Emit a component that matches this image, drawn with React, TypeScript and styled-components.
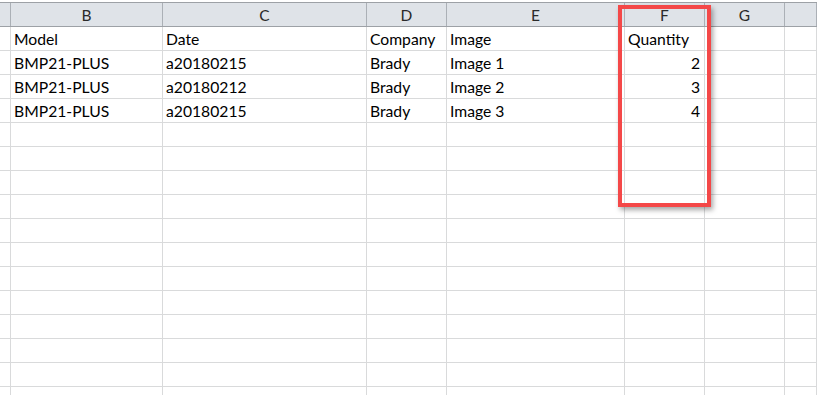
import React from 'react';
import styled, { createGlobalStyle } from 'styled-components';

const GlobalStyle = createGlobalStyle`
  html, body {
    margin: 0;
    padding: 0;
    background: #ffffff;
  }
  body {
    font-family: Lato, "Liberation Sans", sans-serif;
  }
`;

const COLUMNS = ['', 'B', 'C', 'D', 'E', 'F', 'G', ''];
const WIDTHS = '11px 152px 204px 80px 178px 80px 80px 1fr';

const rows: string[][] = [
  ['', 'Model', 'Date', 'Company', 'Image', 'Quantity', '', ''],
  ['', 'BMP21-PLUS', 'a20180215', 'Brady', 'Image 1', '2', '', ''],
  ['', 'BMP21-PLUS', 'a20180212', 'Brady', 'Image 2', '3', '', ''],
  ['', 'BMP21-PLUS', 'a20180215', 'Brady', 'Image 3', '4', '', '']
];

const TOTAL_ROWS = 16;

const Sheet = styled.div`
  position: relative;
  width: 817px;
  height: 395px;
  overflow: hidden;
  padding-top: 2px;
  box-sizing: border-box;
`;

const HeaderRow = styled.div`
  display: grid;
  grid-template-columns: ${WIDTHS};
  height: 25px;
  border-top: 1px solid #9da1a6;
  border-bottom: 1px solid #9da1a6;
  background: #dfe3e8;
  box-sizing: border-box;
`;

const HeaderCell = styled.div`
  display: flex;
  align-items: center;
  justify-content: center;
  padding-top: 1px;
  border-right: 1px solid #abb0b6;
  font-size: 15.5px;
  color: #2a2a2a;
  box-sizing: border-box;
`;

const Row = styled.div`
  display: grid;
  grid-template-columns: ${WIDTHS};
  height: 24px;
`;

const Cell = styled.div<{ $numeric?: boolean }>`
  display: flex;
  align-items: flex-end;
  justify-content: ${(p) => (p.$numeric ? 'flex-end' : 'flex-start')};
  padding: 0 4px 2px 3px;
  border-right: 1px solid #d9dadb;
  border-bottom: 1px solid #d9dadb;
  box-sizing: border-box;
  font-size: 15.7px;
  color: #000000;
  white-space: nowrap;
  overflow: hidden;
`;

const Highlight = styled.div`
  position: absolute;
  left: 618px;
  top: 5px;
  width: 93px;
  height: 202px;
  border: 4px solid #f44848;
  box-sizing: border-box;
  box-shadow: 2px 3px 5px rgba(0, 0, 0, 0.35);
  pointer-events: none;
`;

const isNumeric = (v: string) => v !== '' && !isNaN(Number(v));

export default function App() {
  const body = Array.from({ length: TOTAL_ROWS }, (_, i) => rows[i] || COLUMNS.map(() => ''));

  return (
    <>
      <GlobalStyle />
      <Sheet>
        <HeaderRow>
          {COLUMNS.map((c, i) => (
            <HeaderCell key={i}>{c}</HeaderCell>
          ))}
        </HeaderRow>
        {body.map((r, ri) => (
          <Row key={ri}>
            {r.map((v, ci) => (
              <Cell key={ci} $numeric={isNumeric(v)}>
                {v}
              </Cell>
            ))}
          </Row>
        ))}
        <Highlight />
      </Sheet>
    </>
  );
}
